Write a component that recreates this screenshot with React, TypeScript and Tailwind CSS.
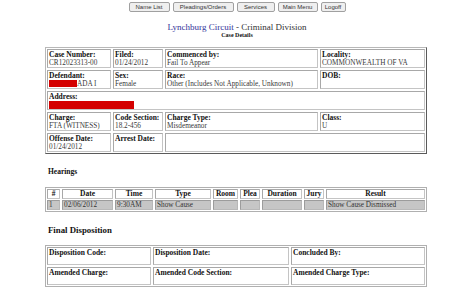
import React from "react";

const serif = "font-['Liberation_Serif','Times_New_Roman',serif]";

function Btn({ w, children }: { w: string; children: React.ReactNode }) {
  return (
    <div
      className={`${w} h-[10px] border border-[#a0a0a0] rounded-[2px] bg-[#efefef] flex items-center justify-center text-[6px] leading-none text-[#333] font-['Liberation_Sans',Arial,sans-serif]`}
    >
      {children}
    </div>
  );
}

function Cell({
  label,
  children,
  span,
}: {
  label: string;
  children?: React.ReactNode;
  span?: string;
}) {
  return (
    <div className={`${span ?? ""} border border-t-[#a8a8a8] border-l-[#a8a8a8] border-b-[#c4c4c4] border-r-[#c4c4c4] pl-[1px] pt-[1px] leading-[8px] overflow-hidden`}>
      <div className="font-bold text-[7.5px] text-[#111] whitespace-nowrap">{label}</div>
      <div className="text-[7.25px] text-[#3a3a3a] whitespace-nowrap">{children}</div>
    </div>
  );
}

function H({ children }: { children: React.ReactNode }) {
  return (
    <div className="border border-t-[#a8a8a8] border-l-[#a8a8a8] border-b-[#c4c4c4] border-r-[#c4c4c4] bg-white flex items-center justify-center text-[7.5px] leading-[8px] font-bold text-[#111]">
      {children}
    </div>
  );
}

function D({ children }: { children?: React.ReactNode }) {
  return (
    <div className="border border-t-[#9c9c9c] border-l-[#9c9c9c] border-b-[#b8b8b8] border-r-[#b8b8b8] bg-[#c6c6c6] flex items-center pl-[1px] text-[7.25px] leading-[8px] text-[#333] whitespace-nowrap overflow-hidden">
      {children}
    </div>
  );
}

function F({ label }: { label: string }) {
  return (
    <div className="border border-t-[#a8a8a8] border-l-[#a8a8a8] border-b-[#c4c4c4] border-r-[#c4c4c4] pl-[1px] pt-[1px] text-[7.5px] leading-[8px] font-bold text-[#111] whitespace-nowrap">
      {label}
    </div>
  );
}

export default function App() {
  return (
    <div className={`w-[474px] h-[296px] bg-white overflow-hidden ${serif}`}>
      <div className="pt-[2px] flex justify-center gap-[3px]">
        <Btn w="w-[41px]">Name List</Btn>
        <Btn w="w-[61px]">Pleadings/Orders</Btn>
        <Btn w="w-[38px]">Services</Btn>
        <Btn w="w-[40px]">Main Menu</Btn>
        <Btn w="w-[25px]">Logoff</Btn>
      </div>

      <div className="mt-[10px] text-center text-[9px] leading-[10px]">
        <span className="text-[#333399]">Lynchburg Circuit</span>
        <span className="text-[#333]"> - Criminal Division</span>
      </div>
      <div className="text-center text-[6px] leading-[7px] font-bold text-[#111]">Case Details</div>

      <div className="ml-[45px] mt-[8px] w-[382px] border border-t-[#b8b8b8] border-l-[#b8b8b8] border-r-[#5a5a5a] border-b-[#5a5a5a] p-[1px] grid grid-cols-[64px_50px_153px_105px] auto-rows-[19px] gap-[2px]">
        <Cell label="Case Number:">CR12023313-00</Cell>
        <Cell label="Filed:">01/24/2012</Cell>
        <Cell label="Commenced by:">Fail To Appear</Cell>
        <Cell label="Locality:">COMMONWEALTH OF VA</Cell>

        <Cell label="Defendant:">
          <span className="inline-block w-[28px] h-[7px] bg-[#d40000] align-[-1px]"></span>
          ADA I
        </Cell>
        <Cell label="Sex:">Female</Cell>
        <Cell label="Race:">Other (Includes Not Applicable, Unknown)</Cell>
        <Cell label="DOB:"></Cell>

        <div className="col-span-4 border border-t-[#a8a8a8] border-l-[#a8a8a8] border-b-[#c4c4c4] border-r-[#c4c4c4] pl-[1px] pt-[1px] leading-[8px]">
          <div className="font-bold text-[7.5px] text-[#111]">Address:</div>
          <div className="w-[85px] h-[8px] bg-[#d40000]"></div>
        </div>

        <Cell label="Charge:">FTA (WITNESS)</Cell>
        <Cell label="Code Section:">18.2-456</Cell>
        <Cell label="Charge Type:">Misdemeanor</Cell>
        <Cell label="Class:">U</Cell>

        <Cell label="Offense Date:">01/24/2012</Cell>
        <Cell label="Arrest Date:"></Cell>
        <Cell label="" span="col-span-2"></Cell>
      </div>

      <div className="mt-[13px] pl-[3px] ml-[45px] text-[7.5px] leading-[9px] font-bold text-[#111]">Hearings</div>

      <div className="ml-[45px] mt-[11px] w-[382px] border border-[#b0b0b0] p-[1px] grid grid-cols-[13px_51px_38px_56px_25px_20px_40px_20px_99px] auto-rows-[10px] gap-x-[2px] gap-y-[1px]">
        <H>#</H>
        <H>Date</H>
        <H>Time</H>
        <H>Type</H>
        <H>Room</H>
        <H>Plea</H>
        <H>Duration</H>
        <H>Jury</H>
        <H>Result</H>
        <D>1</D>
        <D>02/06/2012</D>
        <D>9:30AM</D>
        <D>Show Cause</D>
        <D />
        <D />
        <D />
        <D />
        <D>Show Cause Dismissed</D>
      </div>

      <div className="mt-[13px] pl-[3px] ml-[45px] text-[8.8px] leading-[10px] font-bold text-[#111]">Final Disposition</div>

      <div className="ml-[45px] mt-[10px] w-[382px] border border-[#b0b0b0] p-[1px] grid grid-cols-[104px_136px_134px] auto-rows-[18px] gap-[2px]">
        <F label="Disposition Code:" />
        <F label="Disposition Date:" />
        <F label="Concluded By:" />
        <F label="Amended Charge:" />
        <F label="Amended Code Section:" />
        <F label="Amended Charge Type:" />
      </div>
    </div>
  );
}
